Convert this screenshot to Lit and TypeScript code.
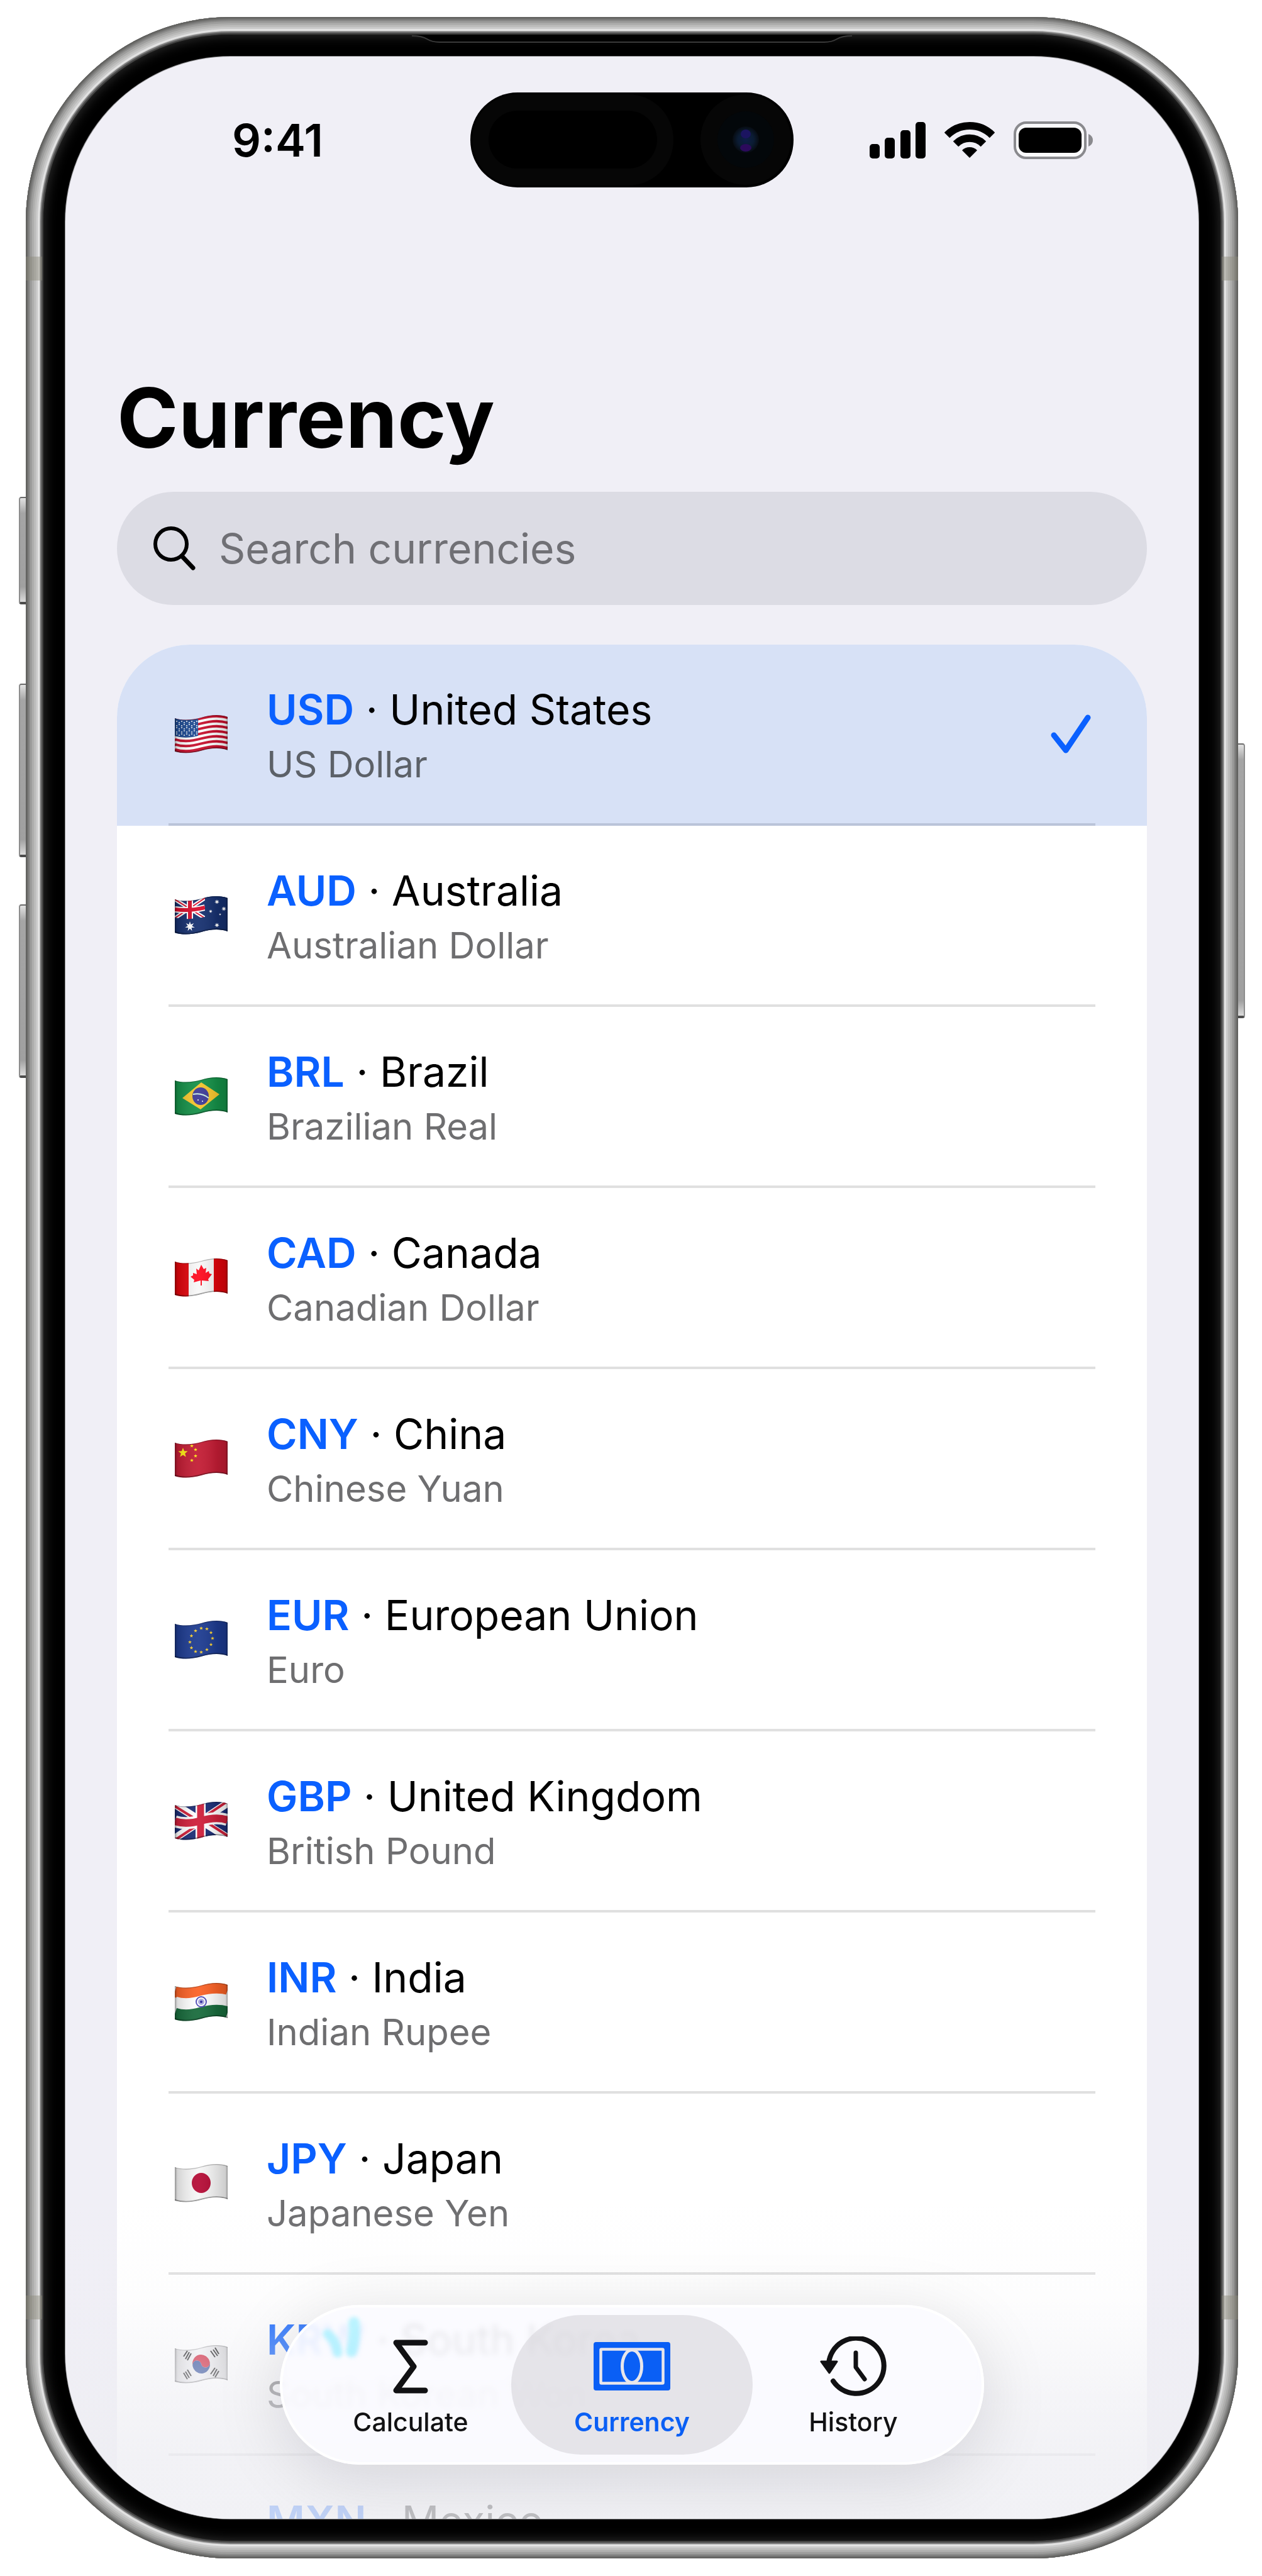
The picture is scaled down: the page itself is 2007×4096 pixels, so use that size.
import { LitElement, html, css, svg, nothing } from 'lit';
import { customElement, state } from 'lit/decorators.js';
import { classMap } from 'lit/directives/class-map.js';

interface Currency {
    code: string;
    country: string;
    name: string;
}

const CURRENCIES: Currency[] = [
    { code: 'USD', country: 'United States', name: 'US Dollar' },
    { code: 'AUD', country: 'Australia', name: 'Australian Dollar' },
    { code: 'BRL', country: 'Brazil', name: 'Brazilian Real' },
    { code: 'CAD', country: 'Canada', name: 'Canadian Dollar' },
    { code: 'CNY', country: 'China', name: 'Chinese Yuan' },
    { code: 'EUR', country: 'European Union', name: 'Euro' },
    { code: 'GBP', country: 'United Kingdom', name: 'British Pound' },
    { code: 'INR', country: 'India', name: 'Indian Rupee' },
    { code: 'JPY', country: 'Japan', name: 'Japanese Yen' },
    { code: 'KRW', country: 'South Korea', name: 'South Korean Won' },
    { code: 'MXN', country: 'Mexico', name: 'Mexican Peso' },
];

// Horizontal line that follows the wave of the flag cloth
const wave = (y: number) =>
    `M0 ${y + 5}C12 ${y + 9} 28 ${y + 8} 42 ${y + 4}S70 ${y - 2} 84 ${y + 3}`;

const band = (y: number, height: number, color: string) =>
    svg`<path d=${wave(y + height / 2)} stroke=${color} stroke-width=${height + 1} fill="none" />`;

const star = (cx: number, cy: number, r: number, color: string, points = 5) => {
    const list: string[] = [];
    for (let i = 0; i < points * 2; i++) {
        const radius = i % 2 ? r * 0.42 : r;
        const angle = (Math.PI * i) / points - Math.PI / 2;
        list.push(`${(cx + radius * Math.cos(angle)).toFixed(1)},${(cy + radius * Math.sin(angle)).toFixed(1)}`);
    }
    return svg`<polygon points=${list.join(' ')} fill=${color} />`;
};

const fill = (color: string) => svg`<rect width="84" height="62" fill=${color} />`;

const FLAGS: Record<string, () => unknown> = {
    USD: () => svg`
        ${Array.from({ length: 13 }, (_, i) => band(i * 4, 4, i % 2 ? '#ffffff' : '#c8102e'))}
        <path d="M0 5C12 9 26 8 37 6V33C26 36 12 37 0 33Z" fill="#1f4c94" />
        ${Array.from({ length: 45 }, (_, i) => svg`
            <circle cx=${3 + (i % 9) * 4} cy=${10 + Math.floor(i / 9) * 5 + (i % 2 ? 2 : 0)} r="1" fill="#ffffff" />
        `)}
    `,
    AUD: () => svg`
        ${fill('#16306f')}
        <path d="M0 5L48 35M0 35L48 3" stroke="#ffffff" stroke-width="6" />
        <path d="M0 5L48 35M0 35L48 3" stroke="#d80d2c" stroke-width="2" />
        <path d="M24 4V38M0 21Q24 24 48 18" stroke="#ffffff" stroke-width="10" fill="none" />
        <path d="M24 4V38M0 21Q24 24 48 18" stroke="#d80d2c" stroke-width="6" fill="none" />
        <path d="M48 0V33Q24 39 0 34V62H84V0Z" fill="#16306f" />
        ${star(24, 48, 8, '#ffffff', 7)}
        ${star(67, 9, 4, '#ffffff', 7)}
        ${star(57, 24, 3, '#ffffff', 7)}
        ${star(78, 20, 4, '#ffffff', 7)}
        ${star(72, 29, 2, '#ffffff')}
        ${star(67, 46, 4, '#ffffff', 7)}
    `,
    BRL: () => svg`
        ${fill('#159048')}
        <path d="M12 33L42 8L71 27L41 51Z" fill="#f6c52c" />
        <ellipse cx="41" cy="30" rx="13" ry="14" fill="#3d3a97" />
        <path d="M29 27Q43 24 54 33" stroke="#ccefe4" stroke-width="2" fill="none" />
        <circle cx="37" cy="36" r="1" fill="#ffffff" />
        <circle cx="44" cy="38" r="1" fill="#ffffff" />
    `,
    CAD: () => svg`
        ${fill('#f8f8f8')}
        <rect width="22" height="62" fill="#e0040b" />
        <rect x="62" width="22" height="62" fill="#e0040b" />
        <path d="M42 10L46 17L50 15L49 23L54 20L55 24L59 25L53 33L54 36L43 35V43H41V35L30 38L31 34L25 29L29 27L29 23L35 25L34 16L38 19Z" fill="#ff0a1e" />
    `,
    CNY: () => svg`
        ${fill('#c31c34')}
        ${star(13, 21, 8, '#ffee14')}
        ${star(27, 10, 3, '#ffee14')}
        ${star(33, 16, 3, '#ffee14')}
        ${star(33, 26, 3, '#ffee14')}
        ${star(27, 33, 3, '#ffee14')}
    `,
    EUR: () => svg`
        ${fill('#1d3b90')}
        ${Array.from({ length: 12 }, (_, i) => {
            const a = (Math.PI * i) / 6;
            return star(42 + 18 * Math.cos(a), 31 + 19 * Math.sin(a) - 3 * Math.cos(a), 3, '#fbd12f');
        })}
    `,
    GBP: () => svg`
        ${fill('#1b2d76')}
        <path d="M0 4L84 57M0 58L84 2" stroke="#ffffff" stroke-width="12" />
        <path d="M0 7L42 33M0 61L42 33M42 27L84 -1M42 27L84 54" stroke="#d0203a" stroke-width="4" />
        <path d="M41 0V62" stroke="#ffffff" stroke-width="16" />
        <path d=${wave(26)} stroke="#ffffff" stroke-width="19" fill="none" />
        <path d="M41 0V62" stroke="#cf1f3a" stroke-width="11" />
        <path d=${wave(26)} stroke="#cf1f3a" stroke-width="12" fill="none" />
    `,
    INR: () => svg`
        ${band(0, 17, '#fb6226')}
        ${band(17, 18, '#ffffff')}
        ${band(35, 18, '#186b3c')}
        <ellipse cx="42" cy="30" rx="8" ry="8" fill="#ffffff" stroke="#4b47b5" stroke-width="2" />
        <circle cx="42" cy="30" r="5" fill="#a9a7dd" />
        <circle cx="42" cy="30" r="2" fill="#2a2499" />
    `,
    JPY: () => svg`
        ${fill('#f6f6f6')}
        <ellipse cx="42" cy="30" rx="15" ry="16" fill="#b50c36" />
    `,
    KRW: () => svg`
        ${fill('#f4f4f6')}
        <g transform="rotate(-12 42 30)">
            <path d="M28 30a14 15 0 0 1 28 0a7 7 0 0 1-14 0a7 7 0 0 0-14 0Z" fill="#d0112b" />
            <path d="M28 30a7 7 0 0 1 14 0a7 7 0 0 0 14 0a14 15 0 0 1-28 0Z" fill="#1f3f93" />
        </g>
        <path
            d="M14 18L20 9M17 22L23 11M20 24L26 13M57 9L64 19M61 7L68 17M64 4L70 14M14 44L20 54M17 42L23 52M20 39L26 49M57 46L64 36M61 49L67 38M64 51L70 41"
            stroke="#161616"
            stroke-width="2"
        />
    `,
    MXN: () => svg`
        ${fill('#ffffff')}
        <rect width="28" height="62" fill="#0b6848" />
        <rect x="56" width="28" height="62" fill="#cc1530" />
    `,
};

const TABS = [
    {
        id: 'calculate',
        label: 'Calculate',
        icon: html`
            <svg width="56" height="86" viewBox="0 0 56 86" fill="none" stroke="currentColor" stroke-width="9" stroke-linecap="round" stroke-linejoin="round" aria-hidden="true">
                <path d="M51 5H5L33 43L5 81H51" />
            </svg>
        `,
    },
    {
        id: 'currency',
        label: 'Currency',
        icon: html`
            <svg width="122" height="78" viewBox="0 0 122 78" fill="none" aria-hidden="true">
                <rect width="122" height="77" rx="4" fill="currentColor" />
                <rect x="11.5" y="11.5" width="99" height="54" rx="1" stroke="#e8e6ea" stroke-width="4.5" />
                <ellipse cx="61" cy="38.5" rx="15.5" ry="26" stroke="#e8e6ea" stroke-width="5" />
            </svg>
        `,
    },
    {
        id: 'history',
        label: 'History',
        icon: html`
            <svg width="106" height="96" viewBox="0 0 106 96" fill="none" stroke="currentColor" stroke-width="8" stroke-linecap="round" stroke-linejoin="round" aria-hidden="true">
                <path d="M14 42A44 44 0 1 1 21 71" />
                <path d="M57 26V49L71 68" stroke-width="7" />
                <path d="M2 40H27L15 58Z" fill="currentColor" stroke-width="3" />
            </svg>
        `,
    },
];

@customElement('app-root')
export class AppRoot extends LitElement {
    static styles = css`
        :host {
            display: flex;
            box-sizing: border-box;
            height: 100vh;
            padding: 27px 38px 28px 41px;
            background: #ffffff;
            color: #000000;
            font-family: Inter, 'Liberation Sans', sans-serif;
        }

        * {
            box-sizing: border-box;
        }

        button,
        input {
            font: inherit;
            color: inherit;
            border: 0;
            background: none;
            padding: 0;
            margin: 0;
        }

        svg {
            display: block;
            flex: none;
        }

        .defs {
            position: absolute;
            width: 0;
            height: 0;
        }

        /* Phone body */
        .device {
            position: relative;
            flex: 1;
            min-width: 0;
            display: flex;
            padding: 28px;
            border-radius: 326px;
            background: #3a3a39;
            box-shadow:
                inset 0 0 0 1px #5c5c5a,
                inset 0 0 0 3px #696967,
                inset 0 0 0 5px #7a7a79,
                inset 0 0 0 7px #8b8b8a,
                inset 0 0 0 10px #9d9d9c,
                inset 0 0 0 13px #aeaead,
                inset 0 0 0 16px #bcbcbb,
                inset 0 0 0 19px #cacaca,
                inset 0 0 0 22px #e2e2e2,
                inset 0 0 0 23px #b4b4b4,
                inset 0 0 0 25px #787878,
                inset 0 0 0 27px #4a4a4a;
        }

        .antenna {
            position: absolute;
            width: 26px;
            height: 38px;
            background: rgba(140, 138, 122, 0.45);
        }

        .antenna.left {
            left: 0;
        }

        .antenna.right {
            right: 0;
        }

        .antenna.upper {
            top: 381px;
        }

        .antenna.lower {
            bottom: 380px;
        }

        .key {
            position: absolute;
            width: 11px;
            border: 2px solid #8d8d8d;
            border-top-color: #6a6a6a;
            border-bottom: 4px solid #4c4c4c;
            background: linear-gradient(#e2e2e2, #a5a5a5 24px, #a0a0a0 calc(100% - 24px), #dcdcdc);
        }

        .key.left {
            right: 100%;
            border-right: 0;
            border-radius: 4px 0 0 4px;
        }

        .key.right {
            left: 100%;
            border-left: 0;
            border-radius: 0 4px 4px 0;
        }

        .key.action {
            top: 763px;
            height: 171px;
        }

        .key.volume-up {
            top: 1060px;
            height: 276px;
        }

        .key.volume-down {
            top: 1411px;
            height: 276px;
        }

        .key.power {
            top: 1155px;
            height: 437px;
        }

        .bezel {
            position: relative;
            flex: 1;
            min-width: 0;
            display: flex;
            padding: 35px;
            border-radius: 298px;
            background: #000000;
            box-shadow: inset 0 0 20px #343434;
        }

        .speaker {
            position: absolute;
            top: 0;
            left: 50%;
            transform: translateX(-50%);
        }

        .screen {
            position: relative;
            flex: 1;
            min-width: 0;
            overflow: hidden;
            border-radius: 263px;
            background: #f0eff6;
            box-shadow: 0 0 0 1px #8c8c8e;
        }

        /* Status bar */
        .status {
            display: grid;
            grid-template-columns: 1fr 514px 1fr;
            align-items: center;
            padding-top: 57px;
        }

        .time {
            justify-self: end;
            padding-right: 234px;
            font-size: 72px;
            font-weight: 600;
            line-height: 84px;
        }

        .island {
            height: 151px;
        }

        .indicators {
            display: flex;
            align-items: center;
            gap: 30px;
            padding-left: 121px;
        }

        /* Page */
        .page {
            padding: 286px 82px 0;
        }

        h1 {
            margin: 0;
            font-size: 132px;
            font-weight: 700;
            line-height: 160px;
        }

        .search {
            display: flex;
            align-items: center;
            gap: 36px;
            height: 180px;
            margin: 38px 0 63px;
            padding: 0 56px;
            border-radius: 90px;
            background: #dcdce4;
        }

        .search input {
            flex: 1;
            min-width: 0;
            height: 90px;
            outline: none;
            font-size: 66px;
        }

        .search input::placeholder {
            color: #707075;
            opacity: 1;
        }

        .list {
            margin: 0;
            padding: 0;
            overflow: hidden;
            list-style: none;
            border-radius: 116px 116px 0 0;
            background: #ffffff;
        }

        .row {
            padding: 0 82px;
        }

        .row.selected {
            background: #d7e1f6;
        }

        .entry {
            display: flex;
            align-items: center;
            gap: 62px;
            width: 100%;
            height: 288px;
            padding: 0 7px 0 10px;
            border-bottom: 4px solid #e0e0e0;
            text-align: left;
            cursor: pointer;
        }

        .selected .entry {
            border-color: #bac4d9;
        }

        .label {
            flex: 1;
            min-width: 0;
            padding-top: 6px;
        }

        .title,
        .name {
            display: block;
            white-space: nowrap;
        }

        .title {
            font-size: 66px;
            line-height: 90px;
        }

        .code {
            color: #0a60ff;
            font-weight: 600;
        }

        .name {
            color: #6e6e70;
            font-size: 58px;
            line-height: 84px;
        }

        .selected .name {
            color: #5c6168;
        }

        /* Tab bar floating over the list */
        .fade {
            position: absolute;
            inset: auto 0 0;
            height: 500px;
            pointer-events: none;
            background: linear-gradient(
                rgba(238, 238, 243, 0),
                rgba(238, 238, 243, 0.12) 30%,
                rgba(238, 238, 243, 0.6) 62%,
                rgba(238, 238, 243, 0.78) 82%,
                rgba(238, 238, 243, 0.8)
            );
        }

        .tabs {
            position: absolute;
            bottom: 86px;
            left: 50%;
            transform: translateX(-50%);
            display: flex;
            padding: 16px;
            overflow: hidden;
            border-radius: 127px;
            background: rgba(251, 251, 255, 0.9);
            backdrop-filter: blur(5px);
        }

        .tabs-shadow {
            position: absolute;
            bottom: 86px;
            left: 50%;
            transform: translateX(-50%);
            width: 1120px;
            height: 254px;
            border-radius: 127px;
            box-shadow: 0 20px 110px rgba(0, 0, 20, 0.13);
        }

        .rim {
            position: absolute;
            inset: 0;
            border: 4px solid #ffffff;
            border-radius: 127px;
            pointer-events: none;
        }

        .glint {
            position: absolute;
            top: 14px;
            left: 56px;
        }

        .tab {
            display: flex;
            flex-direction: column;
            align-items: center;
            width: 384px;
            height: 222px;
            border-radius: 111px;
            color: #111113;
            font-size: 41px;
            font-weight: 500;
            line-height: 56px;
            cursor: pointer;
            position: relative;
        }

        .tab + .tab {
            margin-left: -32px;
        }

        .tab.active {
            background: rgba(216, 215, 221, 0.65);
            color: #0a5ff5;
            font-weight: 600;
        }

        .glyph {
            display: grid;
            place-items: center;
            height: 142px;
            padding-top: 22px;
        }
    `;

    @state() private query = '';
    @state() private selected = 'USD';
    @state() private tab = 'currency';

    private _handleInput(event: Event) {
        this.query = (event.target as HTMLInputElement).value;
    }

    private get _visible() {
        const q = this.query.trim().toLowerCase();
        return CURRENCIES.filter((c) => `${c.code} ${c.country} ${c.name}`.toLowerCase().includes(q));
    }

    private _renderFlag(code: string) {
        return html`
            <svg class="flag" width="84" height="61" viewBox="0 0 84 61" aria-hidden="true">
                <g clip-path="url(#cloth)">
                    ${FLAGS[code]()}
                    <rect width="84" height="62" fill="url(#folds)" />
                    <path d=${wave(52)} stroke="#000000" stroke-opacity="0.35" stroke-width="2" fill="none" />
                    <path d=${wave(0)} stroke="#000000" stroke-opacity="0.25" stroke-width="2" fill="none" />
                </g>
            </svg>
        `;
    }

    private _renderRow(c: Currency) {
        const selected = c.code === this.selected;
        return html`
            <li class=${classMap({ row: true, selected })}>
                <button class="entry" aria-pressed=${selected} @click=${() => (this.selected = c.code)}>
                    ${this._renderFlag(c.code)}
                    <span class="label">
                        <span class="title"><span class="code">${c.code}</span> · ${c.country}</span>
                        <span class="name">${c.name}</span>
                    </span>
                    ${selected
                        ? html`
                            <svg width="64" height="62" viewBox="0 0 64 62" fill="none" stroke="#0a60ff" stroke-width="9" stroke-linecap="round" stroke-linejoin="round" aria-hidden="true">
                                <path d="M5 33L24 57L59 5" />
                            </svg>
                        `
                        : nothing}
                </button>
            </li>
        `;
    }

    private _renderStatus() {
        return html`
            <div class="status">
                <span class="time">9:41</span>
                <svg class="island" width="514" height="151" viewBox="0 0 514 151" aria-hidden="true">
                    <rect width="514" height="151" rx="75" fill="#000000" />
                    <rect x="3" y="3" width="320" height="145" rx="72" fill="#060606" />
                    <rect x="29" y="29" width="268" height="92" rx="46" fill="#000000" />
                    <circle cx="438" cy="75" r="72" fill="#060606" />
                    <circle cx="438" cy="75" r="45" fill="#03070a" />
                    <circle cx="438" cy="75" r="21" fill="url(#lens)" />
                    <ellipse cx="438" cy="66" rx="8" ry="7" fill="#1b1460" />
                    <ellipse cx="438" cy="88" rx="9" ry="6" fill="#2c0a5c" />
                </svg>
                <div class="indicators">
                    <svg width="89" height="58" viewBox="0 0 89 58" aria-hidden="true">
                        <rect y="35" width="16" height="23" rx="5" />
                        <rect x="24" y="25" width="16" height="33" rx="5" />
                        <rect x="49" y="13" width="16" height="45" rx="5" />
                        <rect x="73" width="16" height="58" rx="5" />
                    </svg>
                    <svg width="80" height="58" viewBox="0 0 80 58" fill="none" stroke="#000000" stroke-width="12" aria-hidden="true">
                        <path d="M4 21A51 51 0 0 1 76 21" />
                        <path d="M18 35A31 31 0 0 1 62 35" />
                        <path d="M40 57L28 45A17 17 0 0 1 52 45Z" fill="#000000" stroke="none" />
                    </svg>
                    <svg width="127" height="60" viewBox="0 0 127 60" aria-hidden="true">
                        <rect x="2" y="2" width="112" height="56" rx="18" fill="#fafafc" stroke="#8a8a8e" stroke-width="4" />
                        <rect x="8" y="10" width="100" height="40" rx="12" />
                        <path d="M119 20Q126 23 126 30T119 40Z" fill="#8a8a8e" />
                    </svg>
                </div>
            </div>
        `;
    }

    render() {
        return html`
            <svg class="defs" aria-hidden="true">
                <defs>
                    <clipPath id="cloth">
                        <path d="M0 5C12 9 28 8 42 4S70 -2 84 3V56C70 51 56 53 42 57S12 62 0 58Z" />
                    </clipPath>
                    <linearGradient id="folds">
                        <stop offset="0" stop-color="#000000" stop-opacity="0.4" />
                        <stop offset="0.05" stop-color="#000000" stop-opacity="0.14" />
                        <stop offset="0.45" stop-color="#ffffff" stop-opacity="0.06" />
                        <stop offset="0.8" stop-color="#000000" stop-opacity="0.1" />
                        <stop offset="0.96" stop-color="#000000" stop-opacity="0.16" />
                        <stop offset="1" stop-color="#000000" stop-opacity="0.4" />
                    </linearGradient>
                    <radialGradient id="lens">
                        <stop offset="0" stop-color="#0d1d48" />
                        <stop offset="0.6" stop-color="#0b1c33" />
                        <stop offset="1" stop-color="#070c12" />
                    </radialGradient>
                </defs>
            </svg>
            <div class="device">
                <span class="key left action"></span>
                <span class="key left volume-up"></span>
                <span class="key left volume-down"></span>
                <span class="key right power"></span>
                <span class="antenna left upper"></span>
                <span class="antenna right upper"></span>
                <span class="antenna left lower"></span>
                <span class="antenna right lower"></span>
                <div class="bezel">
                    <svg class="speaker" width="700" height="20" viewBox="0 0 700 20" aria-hidden="true">
                        <path d="M0 0Q16 1 24 6T44 12H656Q668 11 676 6T700 0Z" fill="#000000" />
                        <path d="M0 2Q16 2 24 7T44 12H656Q668 12 676 7T700 2" fill="none" stroke="#3a3a3a" stroke-width="2" />
                    </svg>
                    <div class="screen">
                        ${this._renderStatus()}
                        <main class="page">
                            <h1>Currency</h1>
                            <label class="search">
                                <svg width="70" height="70" viewBox="0 0 70 70" fill="none" stroke="#000000" stroke-width="6" stroke-linecap="round" aria-hidden="true">
                                    <circle cx="30" cy="28" r="25" />
                                    <path d="M47 47L65 66" stroke-width="7" />
                                </svg>
                                <input
                                    type="text"
                                    name="query"
                                    aria-label="Search currencies"
                                    placeholder="Search currencies"
                                    .value=${this.query}
                                    @input=${this._handleInput}
                                >
                            </label>
                            <ul class="list">
                                ${this._visible.map((c) => this._renderRow(c))}
                            </ul>
                        </main>
                        <div class="fade"></div>
                        <div class="tabs-shadow"></div>
                        <nav class="tabs">
                            <svg class="glint" width="90" height="80" viewBox="0 0 90 80" fill="none" stroke="#a4f0ff" stroke-linecap="round" aria-hidden="true">
                                <path d="M20 32Q34 44 36 62" stroke-width="15" stroke-opacity="0.75" filter="blur(3px)" />
                                <path d="M62 14Q64 40 58 60" stroke-width="18" stroke-opacity="0.75" filter="blur(3px)" />
                            </svg>
                            ${TABS.map((t) => html`
                                <button
                                    class=${classMap({ tab: true, active: t.id === this.tab })}
                                    @click=${() => (this.tab = t.id)}
                                >
                                    <span class="glyph">${t.icon}</span>
                                    ${t.label}
                                </button>
                            `)}
                            <span class="rim"></span>
                        </nav>
                    </div>
                </div>
            </div>
        `;
    }
}
